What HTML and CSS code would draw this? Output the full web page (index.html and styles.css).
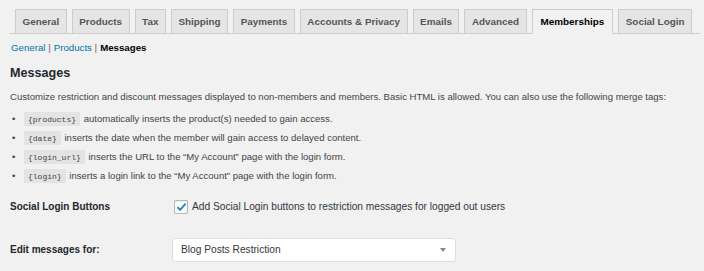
FILE: index.html
```html
<!DOCTYPE html>
<html lang="en">
<head>
    <meta charset="UTF-8">
    <title>Memberships Settings</title>
    <link rel="stylesheet" href="styles.css">
</head>
<body>
    <nav class="nav-tabs">
        <a class="nav-tab" href="#">General</a>
        <a class="nav-tab" href="#">Products</a>
        <a class="nav-tab" href="#">Tax</a>
        <a class="nav-tab" href="#">Shipping</a>
        <a class="nav-tab" href="#">Payments</a>
        <a class="nav-tab" href="#">Accounts &amp; Privacy</a>
        <a class="nav-tab" href="#">Emails</a>
        <a class="nav-tab" href="#">Advanced</a>
        <a class="nav-tab active" href="#">Memberships</a>
        <a class="nav-tab" href="#">Social Login</a>
    </nav>

    <ul class="subsubsub">
        <li><a href="#">General</a> |</li>
        <li><a href="#">Products</a> |</li>
        <li><a href="#" class="current">Messages</a></li>
    </ul>

    <h2>Messages</h2>
    <p class="intro">Customize restriction and discount messages displayed to non-members and members. Basic HTML is allowed. You can also use the following merge tags:</p>
    <ul class="merge-tags">
        <li><code>{products}</code> automatically inserts the product(s) needed to gain access.</li>
        <li><code>{date}</code> inserts the date when the member will gain access to delayed content.</li>
        <li><code>{login_url}</code> inserts the URL to the “My Account” page with the login form.</li>
        <li><code>{login}</code> inserts a login link to the “My Account” page with the login form.</li>
    </ul>

    <div class="form-table">
        <div class="form-row">
            <div class="form-label">Social Login Buttons</div>
            <label class="form-field check">
                <span class="checkbox">
                    <svg width="11" height="10" viewBox="0 0 11 10"><path d="M1.5 5.2 L4.2 7.8 L9.6 1.6" fill="none" stroke="#1e8cbe" stroke-width="2"/></svg>
                </span>
                Add Social Login buttons to restriction messages for logged out users
            </label>
        </div>
        <div class="form-row">
            <div class="form-label">Edit messages for:</div>
            <div class="form-field">
                <div class="select">
                    <span>Blog Posts Restriction</span>
                    <span class="arrow"></span>
                </div>
            </div>
        </div>
    </div>
</body>
</html>
```

FILE: styles.css
```css
body {
    margin: 0;
    padding: 9px 4px 0 10px;
    background-color: #f1f1f1;
    color: #444;
    font-family: "Liberation Sans", Arial, sans-serif;
    font-size: 9.55px;
}

a {
    color: #0073aa;
    text-decoration: none;
}

.nav-tabs {
    display: flex;
    gap: 5px;
    padding-left: 5px;
    border-bottom: 1px solid #ccc;
}

.nav-tab {
    display: block;
    flex-shrink: 0;
    white-space: nowrap;
    height: 23px;
    line-height: 23px;
    padding: 0 6.5px;
    margin-bottom: -1px;
    border: 1px solid #ccc;
    background-color: #e5e5e5;
    color: #555;
    font-size: 9.9px;
    font-weight: bold;
}

.nav-tab.active {
    padding: 0 8px;
    background-color: #f1f1f1;
    border-bottom-color: #f1f1f1;
    color: #000;
}

.subsubsub {
    list-style: none;
    margin: 7px 0 0 1px;
    padding: 0;
    display: flex;
    gap: 3px;
    color: #666;
    font-size: 9.7px;
    line-height: 13px;
}

.subsubsub .current {
    color: #000;
    font-weight: bold;
}

h2 {
    margin: 11px 0 0;
    color: #23282d;
    font-size: 12.6px;
    line-height: 16px;
}

.intro {
    margin: 9px 0 0;
    line-height: 14px;
}

.merge-tags {
    list-style: none;
    margin: 5px 0 0;
    padding: 0;
}

.merge-tags li {
    height: 19px;
    line-height: 19px;
    padding-left: 14px;
    position: relative;
}

.merge-tags li::before {
    content: "•";
    position: absolute;
    left: 2px;
    color: #444;
}

code {
    background-color: #e3e3e3;
    padding: 3px 4px 2px;
    margin-right: 1px;
    font-family: "Liberation Mono", monospace;
    font-size: 8px;
    line-height: 1;
    color: #444;
}

.form-table {
    margin-top: 0;
}

.form-row {
    display: flex;
    align-items: center;
    height: 43px;
    font-size: 10px;
}

.form-label {
    width: 162px;
    color: #23282d;
    font-weight: bold;
}

.check {
    display: flex;
    align-items: center;
    gap: 4px;
    margin-left: 2px;
    color: #32373c;
    font-size: 10.2px;
}

.checkbox {
    width: 12px;
    height: 12px;
    border: 1px solid #b4b9be;
    background-color: #fff;
    border-radius: 1px;
    display: flex;
    align-items: center;
    justify-content: center;
    box-shadow: inset 0 1px 2px rgba(0, 0, 0, 0.1);
}

.select {
    width: 266px;
    height: 22px;
    padding: 0 8px;
    border: 1px solid #ddd;
    border-radius: 3px;
    background-color: #fff;
    display: flex;
    align-items: center;
    justify-content: space-between;
    color: #32373c;
    font-size: 10.2px;
}

.arrow {
    width: 0;
    height: 0;
    border-left: 3px solid transparent;
    border-right: 3px solid transparent;
    border-top: 4px solid #888;
    margin-right: 1px;
}
```
